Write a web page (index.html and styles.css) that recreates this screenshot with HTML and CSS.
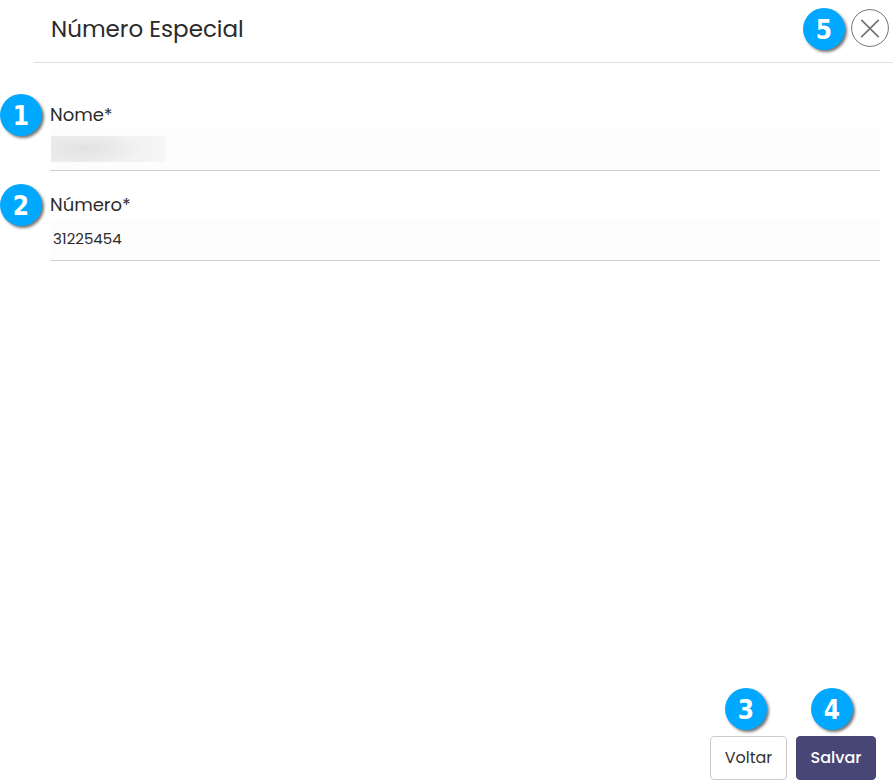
FILE: index.html
```html
<!DOCTYPE html>
<html lang="pt-br">
  <head>
    <meta charset="utf-8">
    <title>Número Especial</title>
    <link rel="stylesheet" href="styles.css">
  </head>

  <body>
    <form class="panel">

      <header class="panel-header">
        <h1>Número Especial</h1>
        <div class="close-wrap">
          <span class="badge badge-left">5</span>
          <button class="btn-close" type="button" aria-label="Fechar">
            <svg width="38" height="38" viewBox="0 0 38 38" fill="none" stroke="#747474">
              <circle cx="19" cy="19" r="18.4" stroke-width="1"/>
              <path d="M10.3 10.8 L27.7 28.2 M27.7 10.8 L10.3 28.2" stroke-width="1.7"/>
            </svg>
          </button>
        </div>
      </header>

      <main class="fields">
        <div class="field">
          <span class="badge badge-field">1</span>
          <label for="nome">Nome*</label>
          <input id="nome" type="text">
          <span class="masked"></span>
        </div>
        <div class="field">
          <span class="badge badge-field">2</span>
          <label for="numero">Número*</label>
          <input id="numero" type="text" value="31225454">
        </div>
      </main>

      <footer class="actions">
        <div class="action">
          <span class="badge badge-top">3</span>
          <button class="btn" type="button">Voltar</button>
        </div>
        <div class="action">
          <span class="badge badge-top">4</span>
          <button class="btn btn-primary" type="submit">Salvar</button>
        </div>
      </footer>

    </form>
  </body>
</html>
```

FILE: styles.css
```css
* { box-sizing: border-box; }

body {
  margin: 0;
  background: #fff;
  color: #2b2b2b;
  font-family: Poppins, Inter, sans-serif;
}

.panel {
  display: flex;
  flex-direction: column;
  min-height: 100vh;
  margin-left: 34px;
}

/* header */
.panel-header {
  display: flex;
  justify-content: space-between;
  align-items: center;
  height: 63px;
  padding: 0 4px 6px 17px;
  border-bottom: 1px solid #dfe0e6;
}
.panel-header h1 {
  margin: 0;
  padding-top: 2px;
  font-size: 23px;
  font-weight: 400;
  line-height: 36px;
}
.close-wrap { position: relative; }
.btn-close {
  display: block;
  padding: 0;
  border: 0;
  background: none;
  cursor: pointer;
}
.btn-close svg { display: block; }

/* fields */
.fields {
  display: flex;
  flex-direction: column;
  flex: 1;
  gap: 20px;
  padding: 38px 13px 0 16px;
}
.field {
  position: relative;
  display: flex;
  flex-direction: column;
}
.field label {
  font-size: 18px;
  line-height: 28px;
}
.field input {
  width: 100%;
  height: 42px;
  padding: 0 3px 2px;
  border: 0;
  border-bottom: 1px solid #cbced6;
  background: #fdfdfd;
  color: inherit;
  font-family: inherit;
  font-size: 15px;
  outline: none;
}
.masked {
  position: absolute;
  left: 1px;
  bottom: 9px;
  width: 115px;
  height: 26px;
  background:
    radial-gradient(ellipse 56px 18px at 34px 13px, #e2e2e2, rgba(226, 226, 226, 0)),
    linear-gradient(to right, #eeeeee, #f3f3f3 80%, #f7f7f7);
}

/* buttons */
.actions {
  display: flex;
  justify-content: flex-end;
  gap: 9px;
  padding: 0 17px 1px;
}
.action { position: relative; }
.btn {
  display: block;
  min-width: 77px;
  height: 44px;
  padding: 0 13px 2px;
  border: 1px solid #cbcbcb;
  border-radius: 4px;
  background: #fff;
  color: #333;
  font-family: inherit;
  font-size: 16px;
  cursor: pointer;
}
.btn-primary {
  min-width: 80px;
  border-color: #484675;
  background: #484675;
  color: #fff;
  font-weight: 500;
}

/* numbered markers */
.badge {
  position: absolute;
  width: 42px;
  height: 42px;
  border-radius: 50%;
  background: #00a8ff;
  box-shadow: 2px 2px 3px rgba(0, 0, 0, 0.55);
  color: #fff;
  font: bold 26px/44px "DejaVu Sans Condensed", "DejaVu Sans", sans-serif;
  text-align: center;
}
.badge-left { right: 44px; top: -1px; }
.badge-field { left: -50px; top: -7px; }
.badge-top { left: 15px; bottom: 50px; }
```
